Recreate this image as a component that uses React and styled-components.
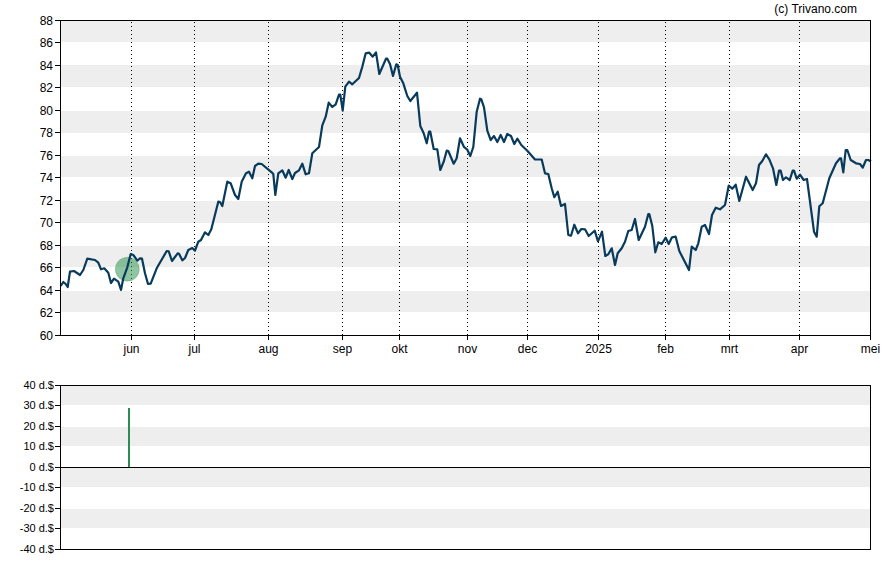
import React from "react";
import styled, { createGlobalStyle } from "styled-components";

const GlobalStyle = createGlobalStyle`
  html, body { margin: 0; padding: 0; background: #fff; }
  body { font-family: "Liberation Sans", Arial, sans-serif; }
`;

const Page = styled.main`
  width: 888px;
  height: 565px;
  display: flex;
  flex-direction: column;
  overflow: hidden;
  background: #fff;
`;
const Credit = styled.div`
  height: 14px;
  padding: 2px 31px 0 0;
  box-sizing: border-box;
  text-align: right;
  font-size: 12px;
  line-height: 14px;
  color: #000;
`;
const ChartSvg = styled.svg`
  display: block;
  flex: none;
  width: 888px;
  margin-top: ${(p) => p.$gap || 0}px;
  overflow: visible;
`;
const Band = styled.rect`
  fill: #eeeeee;
  shape-rendering: crispEdges;
`;
const AxisLine = styled.path`
  stroke: #000;
  stroke-width: 1.3;
  fill: none;
  shape-rendering: crispEdges;
`;
const Tick = styled.line`
  stroke: #000;
  stroke-width: 1;
  shape-rendering: crispEdges;
`;
const MonthGrid = styled.line`
  stroke: #000;
  stroke-width: 1;
  stroke-dasharray: 1 3;
  shape-rendering: crispEdges;
`;
const AxisLabel = styled.text`
  font-family: "Liberation Sans", Arial, sans-serif;
  font-size: ${(p) => p.$size || 12}px;
  fill: #000;
  text-anchor: ${(p) => p.$anchor || "middle"};
`;
const PriceLine = styled.polyline`
  fill: none;
  stroke: #083a5b;
  stroke-width: 2.2;
  stroke-linejoin: round;
  stroke-linecap: butt;
`;
const TradeMarker = styled.circle`
  fill: #228b45;
  fill-opacity: 0.5;
  stroke: #228b45;
  stroke-opacity: 0.25;
`;
const TradeBar = styled.rect`
  fill: #2e8b57;
  shape-rendering: crispEdges;
`;

const L = 60, R = 870;

const months = [
  ["jun", 131], ["jul", 194], ["aug", 268], ["sep", 342], ["okt", 399], ["nov", 467],
  ["dec", 527], ["2025", 598], ["feb", 665], ["mrt", 729], ["apr", 799], ["mei", 870],
];

const priceBands = [[20, 42], [65, 87], [111, 133], [156, 177], [201, 223], [246, 267], [291, 312]];
const priceTicks = Array.from({ length: 15 }, (_, i) => ({ v: 88 - i * 2, y: Math.floor(20 + i * 22.5) }));

const tradeBands = [[385, 405], [427, 446], [467, 487], [509, 528]];
const tradeTicks = [
  [40, 385], [30, 405], [20, 426], [10, 446], [0, 467], [-10, 487], [-20, 508], [-30, 528], [-40, 549],
];

const pricePoints = `60.7,286 63.3,282 65.7,284 67.7,287 70,271.7 74,271 80,275 83.3,270 87.3,258.7 95,260 98.3,262.7
101,269.3 104.3,268.3 108.3,272.7 111,283 114,278.7 118.3,281.7 121,290 123.3,278.3 127.3,267.3 130.7,254 133.3,255
137.3,260.7 140,258.3 142,258.7 145,273.3 148,284 150.7,283.7 156.7,268.3 166.7,251 168.7,251.3 172,261 177.7,253.3
179,253.7 182.3,260.3 185,258 188.3,250 192.3,248 195,250.7 198.3,241.7 201,240 205,232.3 208.3,235 211.3,229.3
218.3,201.7 220,202 222.3,206 227.3,181.7 230.7,183.3 235,195 238.3,199 241.7,181.7 246,173.3 249,171.7 252.3,178.3
255,166 258.3,163.7 261.7,164 271.7,172.3 273.3,174 275.3,195 278.3,173.3 282.3,170.3 285.7,177.7 288.7,170 292.3,179
295,173 299,170.3 302.3,163.7 305.7,174.3 309,173.3 312.3,153.3 319,147 322.3,125.3 325.7,116.7 328.7,102.7 332.3,107
335.7,104.3 339,94.7 340.3,94.7 342.7,110.7 345.3,86.7 349,81.7 352.3,84.3 359,78 362.3,66.7 365.7,53.3 369.3,52.7
372.7,56.7 376,52.3 379.3,74 386,58.7 387.3,58.7 390,64 393,76 396.3,64.3 397.7,65 400,76.7 403.3,83.3 407.3,96
410.3,101 417,92.7 420.3,126 423.7,133.3 426.7,143.3 429,131.7 430.3,131.7 433.7,149 437.3,149.3 440.3,170 443.7,161.7
446.7,150.7 448.3,151 453.7,163.7 456.7,158.3 460,138.3 464,147 467.3,149.7 470.3,156 473.3,147 476.7,111.7 480,98.7
481.3,99.3 484,107.3 487.3,130.7 490.7,140 494,136 497.3,142 500.7,135 504,142 507.3,134 511,136 514.3,144 517.3,138.7
521.3,145 527.3,150.7 535,159.5 541.7,159.5 545,173.3 548.3,174 551.7,188.3 554.3,197.3 557.7,191.7 561,206 565,204
568.3,235 571,235.7 574.3,224.7 578,233.3 581.3,229 585,229.3 588.7,236 594.7,230.7 598,241.3 602,231.7 605.3,256
608.3,254.3 611.7,248.3 615,265 617.7,253.3 621.7,248.3 625,241.7 628.3,231 631.7,230 635,219 638.7,240 645,226.7
648.3,214 649.3,214 652.3,226 655.3,252.3 658.3,242.3 661.7,244 665.7,237.7 668.7,244 672,237.3 675.7,236.7 679.3,251
689,270 691.7,246.7 695.7,250 698.3,243.3 701.7,226.7 705,225 709,234 712,215 715.7,207.7 720,209.3 725,205 728.7,185.7
732.3,188.7 735.7,184.7 739.3,201 746,176.7 752.7,190 756,183.3 759,165 762.3,161 766,154.3 769.3,159.3 773,168.3
776.3,185 779,170.7 780.7,170.7 783,180 786,177.3 789.7,180 792.7,170.7 794,170.7 796.7,178.7 800,174.7 803.7,180
807,179 814,231.7 816.7,236.7 819.3,206.3 822.7,203.3 829.3,178.3 836,163.3 840,158.3 841,158.3 843.3,172.3 845.7,150
847.3,150 850.7,160 856,163.3 860,164 862.7,167.7 866,160 868.3,160 871,161.5`;

function Bands({ rows }) {
  return rows.map(([a, b]) => <Band key={a} x={L} y={a} width={R - L} height={b - a} />);
}

function PriceChart() {
  return (
    <ChartSvg viewBox="0 14 888 346" height="346" role="img" aria-label="Koersverloop">
      <Bands rows={priceBands} />
      {months.slice(0, -1).map(([m, x]) => (
        <MonthGrid key={m} x1={x + 0.5} x2={x + 0.5} y1={22} y2={335} />
      ))}
      <TradeMarker cx={127.3} cy={269.2} r={12} />
      <PriceLine points={pricePoints} />
      <AxisLine d={`M${L}.5 335.5V20.5H${R}.5V335.5H${L}.5`} />
      {priceTicks.map(({ v, y }) => (
        <g key={v}>
          <Tick x1={55} x2={L} y1={y + 0.5} y2={y + 0.5} />
          <AxisLabel $anchor="end" x={53} y={y + 4.5}>{v}</AxisLabel>
        </g>
      ))}
      {months.map(([m, x]) => (
        <g key={m}>
          <Tick x1={x + 0.5} x2={x + 0.5} y1={335} y2={340} />
          <AxisLabel x={x + 0.5} y={353}>{m}</AxisLabel>
        </g>
      ))}
    </ChartSvg>
  );
}

function TradeChart() {
  return (
    <ChartSvg $gap={18} viewBox="0 378 888 182" height="182" role="img" aria-label="Transacties">
      <Bands rows={tradeBands} />
      <TradeBar x={128} y={408} width={2} height={59} />
      <AxisLine d={`M${L}.5 549.5V385.5H${R}.5V549.5H${L}.5M${L} 467.5H${R}`} />
      {tradeTicks.map(([v, y]) => (
        <g key={v}>
          <Tick x1={55} x2={L} y1={y + 0.5} y2={y + 0.5} />
          <AxisLabel $anchor="end" $size={11} x={54} y={y + 4}>{v} d.$</AxisLabel>
        </g>
      ))}
    </ChartSvg>
  );
}

export default function App() {
  return (
    <Page>
      <GlobalStyle />
      <Credit>(c) Trivano.com</Credit>
      <PriceChart />
      <TradeChart />
    </Page>
  );
}
